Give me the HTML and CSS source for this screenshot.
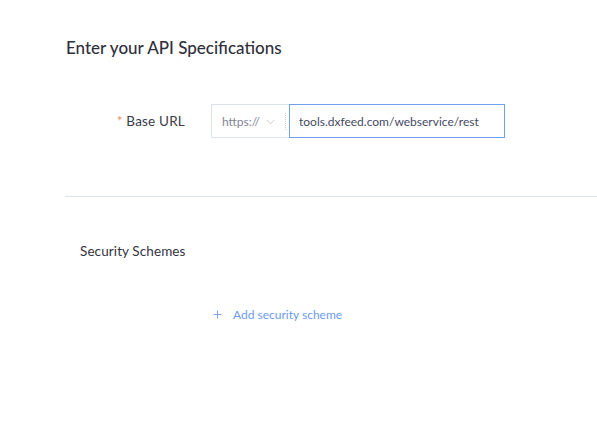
FILE: index.html
```html
<!DOCTYPE html>
<html>
<head>
<meta charset="utf-8">
<link rel="stylesheet" href="styles.css">
</head>
<body>
<div class="page">
  <h1 class="title">Enter your API Specifications</h1>
  <div class="form-row">
    <label class="label"><span class="req">*</span> Base URL</label>
    <div class="input-group">
      <div class="addon">
        <span class="addon-text">https://</span>
        <svg class="chev" width="9" height="6" viewBox="0 0 9 6"><path d="M0.5 0.8 L4.5 4.8 L8.5 0.8" fill="none" stroke="#c5ccd8" stroke-width="1"/></svg>
        <span class="sep"></span>
      </div>
      <div class="input">tools.dxfeed.com/webservice/rest</div>
    </div>
  </div>
  <div class="divider"></div>
  <div class="section-title">Security Schemes</div>
  <div class="add-link">
    <svg class="plus" width="9" height="9" viewBox="0 0 9 9"><path d="M4.5 0.5 V8.5 M0.5 4.5 H8.5" stroke="#7ea4ee" stroke-width="1" fill="none"/></svg>
    <span>Add security scheme</span>
  </div>
</div>
</body>
</html>
```
FILE: styles.css
```css
html, body {
  margin: 0;
  padding: 0;
  background: #ffffff;
}
body {
  font-family: Lato, "Noto Sans", sans-serif;
  color: #333344;
}
.page {
  padding: 37px 0 0 65px;
}
.title {
  margin: 0 0 0 1px;
  font-size: 17px;
  font-weight: 500;
  line-height: 22px;
  color: #30303c;
}
.form-row {
  display: flex;
  align-items: center;
  margin-top: 45px;
}
.label {
  width: 120px;
  text-align: right;
  font-size: 13.5px;
  letter-spacing: 0.2px;
  color: #3a3a48;
}
.req {
  color: #e3965f;
}
.input-group {
  display: flex;
  margin-left: 26px;
  height: 34px;
}
.addon {
  display: flex;
  align-items: center;
  width: 78px;
  box-sizing: border-box;
  border: 1px solid #dbe3ec;
  border-right: none;
  padding-left: 10px;
  position: relative;
}
.addon-text {
  font-size: 12px;
  color: #7f8596;
}
.chev {
  margin-left: 6px;
  margin-top: 1px;
}
.sep {
  position: absolute;
  left: 73px;
  top: 8px;
  height: 17px;
  border-left: 1px dotted #c9d0da;
}
.input {
  width: 216px;
  box-sizing: border-box;
  border: 1px solid #6f9ff0;
  display: flex;
  align-items: center;
  padding-left: 9px;
  font-size: 12px;
  color: #454a63;
}
.divider {
  margin-top: 58px;
  height: 1px;
  background: #d8e5f1;
}
.section-title {
  margin: 46px 0 0 15px;
  font-size: 13.5px;
  letter-spacing: 0.1px;
  line-height: 16px;
  color: #33333f;
}
.add-link {
  display: flex;
  align-items: center;
  margin: 48px 0 0 148px;
  font-size: 12px;
  color: #6d9bef;
}
.plus {
  margin-right: 11px;
}
```
